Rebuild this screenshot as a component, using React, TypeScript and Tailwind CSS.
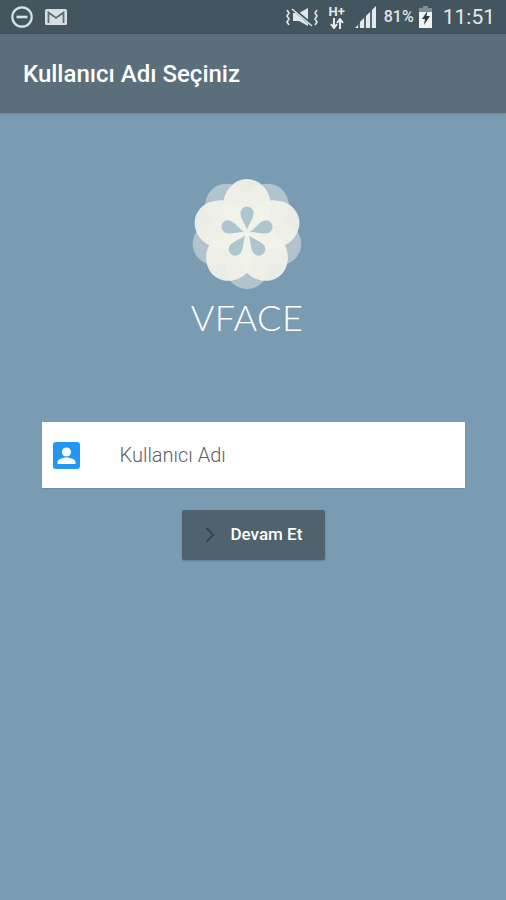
import { ChevronRight } from 'lucide-react'

const petalAngles = [0, 72, 144, 216, 288]

function Logo() {
  return (
    <svg width="120" height="120" viewBox="-60 -60 120 120" className="block">
      {petalAngles.map((a) => (
        <ellipse key={`b${a}`} cx="0" cy="-33" rx="22" ry="23" fill="#dfe6e4" opacity="0.55" transform={`rotate(${a + 36})`} />
      ))}
      {petalAngles.map((a) => (
        <ellipse key={`f${a}`} cx="0" cy="-27" rx="24" ry="27" fill="#f1f2e9" opacity="0.94" transform={`rotate(${a})`} />
      ))}
      {petalAngles.map((a) => (
        <path
          key={`d${a}`}
          d="M0,-3 C-1.5,-9 -6.5,-14 -6.5,-20 A6.5,6.5 0 1 1 6.5,-20 C6.5,-14 1.5,-9 0,-3 Z"
          fill="#aec4cf"
          transform={`rotate(${a})`}
        />
      ))}
    </svg>
  )
}

function StatusIcons() {
  return (
    <div className="flex items-center">
      {/* muted speaker */}
      <svg width="34" height="22" viewBox="0 0 34 22" className="mr-[9px]" fill="none">
        <path d="M8 7h6l9-5v18l-9-5H8z" fill="#dfe5e8" />
        <path d="M7 2l20 17" stroke="#43555f" strokeWidth="3" />
        <path d="M7 3l20 17" stroke="#dfe5e8" strokeWidth="1.5" />
        <path d="M2 4l2 3-2 3 2 3-2 3 2 3M32 4l-2 3 2 3-2 3 2 3-2 3" stroke="#dfe5e8" strokeWidth="1.6" />
      </svg>
      {/* H+ data */}
      <div className="mr-[7px] flex w-[18px] flex-col items-center">
        <span className="font-['Roboto',sans-serif] text-[13px] font-bold leading-[12px] text-[#e4e9eb]">H+</span>
        <svg width="14" height="11" viewBox="0 0 14 11" fill="none" stroke="#e4e9eb" strokeWidth="2">
          <path d="M4 0v9M1 6l3 4 3-4M10 11V2M7 5l3-4 3 4" />
        </svg>
      </div>
      {/* signal */}
      <svg width="24" height="24" viewBox="0 0 24 24" className="mr-[7px]">
        <path d="M1 23l22-21v21z" fill="#55666f" />
        <path d="M2 23l3-3v3zM7 23v-6l4-4v10zM13 23V11l4-4v16zM19 23V5l4-4v22z" fill="#e4e9eb" />
      </svg>
      <span className="mr-[4px] font-['Roboto',sans-serif] text-[16px] font-medium text-[#dfe5e8]">81%</span>
      {/* battery charging */}
      <svg width="16" height="24" viewBox="0 0 16 24" className="mr-[9px]">
        <path d="M5 1h5v2h4v20H1V3h4z" fill="#f0f2f2" />
        <path d="M5 1h5v2h4v4H1V3h4z" fill="#7f8e96" />
        <path d="M9.5 6L4 14h3l-1 6 6-9H8.5z" fill="#2f3b42" />
      </svg>
      <span className="font-['Roboto',sans-serif] text-[21px] leading-none text-[#e4e9eb]">11:51</span>
    </div>
  )
}

export default function App() {
  return (
    <div className="flex min-h-[900px] flex-col bg-[#7a9cb2] font-['Roboto',sans-serif]">
      {/* Status bar */}
      <div className="flex h-[34px] items-center justify-between bg-[#43555f] pl-[11px] pr-[11px]">
        <div className="flex items-center gap-[12px]">
          <svg width="22" height="22" viewBox="0 0 22 22" fill="none">
            <circle cx="11" cy="11" r="9.7" stroke="#d9e0e3" strokeWidth="2.2" />
            <rect x="5.5" y="9.7" width="11" height="2.6" fill="#d9e0e3" />
          </svg>
          <svg width="22" height="18" viewBox="0 0 22 18">
            <rect x="0" y="1" width="22" height="16" rx="1.5" fill="#d9e0e3" />
            <path d="M3.5 15V4.5L11 10l7.5-5.5V15" fill="none" stroke="#5d6d76" strokeWidth="1.8" />
          </svg>
        </div>
        <StatusIcons />
      </div>

      {/* App bar */}
      <div className="flex h-[79px] items-center bg-[#5a6f7b] pl-[23px] shadow-[0_1px_3px_rgba(0,0,0,0.15)]">
        <h1 className="text-[24px] font-medium text-white">Kullanıcı Adı Seçiniz</h1>
      </div>

      {/* Content */}
      <div className="flex flex-col items-center">
        <div className="mt-[60px] mr-[12px] flex flex-col items-center">
          <Logo />
          <span className="mt-[1px] font-['Lato',sans-serif] text-[36px] font-light leading-[46px] tracking-[0.5px] text-white">VFACE</span>
        </div>

        <div className="mt-[82px] flex h-[66px] w-[423px] items-center bg-white pl-[11px] shadow-[0_1px_1px_rgba(0,0,0,0.1)]">
          <svg width="27" height="27" viewBox="0 0 27 27">
            <rect width="27" height="27" rx="3" fill="#2196f3" />
            <circle cx="13.5" cy="10" r="4.6" fill="#fff" />
            <path d="M4.5 22v-2c0-3 6-4.6 9-4.6s9 1.6 9 4.6v2z" fill="#fff" />
          </svg>
          <span className="ml-[40px] text-[20px] font-light text-[#5f5f5f]">Kullanıcı Adı</span>
        </div>

        <button className="mt-[22px] flex h-[50px] w-[143px] items-center rounded-[2px] bg-[#4f626d] pl-[15px] shadow-[0_1px_2px_rgba(0,0,0,0.2)]">
          <ChevronRight size={26} strokeWidth={1.5} className="text-[#2f3e47]" />
          <span className="ml-[8px] text-[17px] font-medium text-white">Devam Et</span>
        </button>
      </div>
    </div>
  )
}
